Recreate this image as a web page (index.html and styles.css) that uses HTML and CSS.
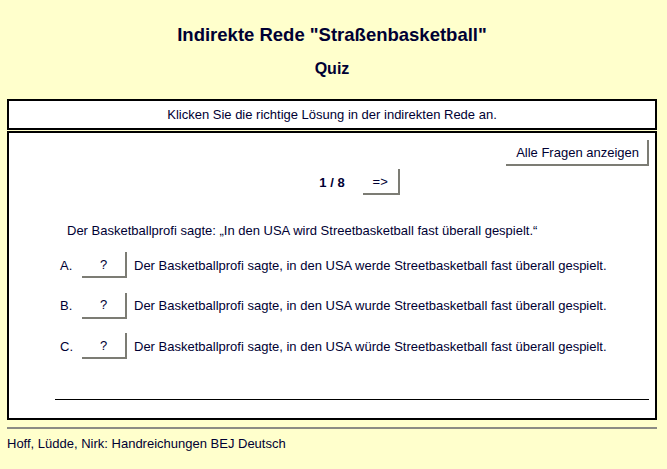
FILE: index.html
```html
<!DOCTYPE html>
<html>
<head>
  <meta charset="utf-8">
  <title>Indirekte Rede "Straßenbasketball"</title>
  <link rel="stylesheet" href="styles.css">
</head>
<body>
  <div class="title-block">
    <h2 class="exercise-title">Indirekte Rede "Straßenbasketball"</h2>
    <h3 class="exercise-subtitle">Quiz</h3>
  </div>

  <div class="instructions">Klicken Sie die richtige Lösung in der indirekten Rede an.</div>

  <div class="main">
    <div class="show-all">
      <button class="btn">Alle Fragen anzeigen</button>
    </div>

    <div class="qnav">
      <button class="btn nav-btn hidden">&lt;=</button>
      <span class="counter">1 / 8</span>
      <button class="btn nav-btn">=&gt;</button>
    </div>

    <div class="question">Der Basketballprofi sagte: „In den USA wird Streetbasketball fast überall gespielt.“</div>

    <ol class="answers">
      <li>
        <span class="letter">A.</span>
        <button class="btn answer-btn">?</button>
        <span class="answer-text">Der Basketballprofi sagte, in den USA werde Streetbasketball fast überall gespielt.</span>
      </li>
      <li>
        <span class="letter">B.</span>
        <button class="btn answer-btn">?</button>
        <span class="answer-text">Der Basketballprofi sagte, in den USA wurde Streetbasketball fast überall gespielt.</span>
      </li>
      <li>
        <span class="letter">C.</span>
        <button class="btn answer-btn">?</button>
        <span class="answer-text">Der Basketballprofi sagte, in den USA würde Streetbasketball fast überall gespielt.</span>
      </li>
    </ol>

    <div class="rule"></div>
  </div>

  <div class="footer-rule"></div>
  <div class="footer">Hoff, Lüdde, Nirk: Handreichungen BEJ Deutsch</div>
</body>
</html>
```

FILE: styles.css
```css
body {
  font-family: "Liberation Sans", Arial, sans-serif;
  font-size: 13px;
  line-height: 15px;
  color: #000033;
  background-color: #ffffcc;
  margin: 0;
  padding: 0 10px 0 7px;
}
.title-block {
  text-align: center;
  padding-top: 24px;
}
.exercise-title {
  font-size: 18.5px;
  line-height: 22px;
  margin: 0;
}
.exercise-subtitle {
  font-size: 16px;
  line-height: 19px;
  margin: 13px 0 0 0;
}
.instructions {
  margin-top: 21px;
  background-color: #ffffff;
  border: 2px solid #000000;
  height: 27px;
  display: flex;
  align-items: center;
  justify-content: center;
}
.main {
  margin-top: 1px;
  background-color: #ffffff;
  border: 2px solid #000000;
  padding: 7px 6px 18px 0;
}
.btn {
  font-family: "Liberation Sans", Arial, sans-serif;
  font-size: 13px;
  color: #000033;
  background-color: #ffffff;
  border-style: solid;
  border-width: 0 2px 2px 0;
  border-color: #ffffff #7c7c74 #7c7c74 #ffffff;
  height: 26px;
  padding: 0 8px 0 10px;
  margin: 0;
  cursor: pointer;
}
.show-all {
  display: flex;
  justify-content: flex-end;
}
.qnav {
  margin-top: 3px;
  display: flex;
  align-items: center;
  justify-content: center;
  padding-left: 6px;
}
.nav-btn {
  width: 37px;
  padding: 0;
}
.hidden {
  visibility: hidden;
}
.counter {
  font-weight: bold;
  margin: 0 18px;
}
.question {
  margin-top: 28px;
  padding-left: 58px;
}
.answers {
  list-style: none;
  margin: 14px 0 0 0;
  padding: 0 0 0 51px;
  display: flex;
  flex-direction: column;
  gap: 14.5px;
}
.answers li {
  display: flex;
  align-items: center;
}
.letter {
  width: 22px;
}
.answer-btn {
  width: 45px;
  padding: 0;
  margin-right: 7px;
}
.rule {
  margin: 40px 0 0 46px;
  border-top: 1px solid #000000;
}
.footer-rule {
  margin-top: 7px;
  border-top: 2px solid #8c8c84;
}
.footer {
  margin-top: 7px;
}
```
